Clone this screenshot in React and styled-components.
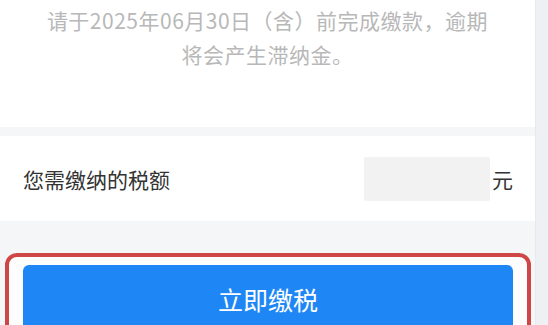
import React from "react";
import styled, { createGlobalStyle } from "styled-components";

const Global = createGlobalStyle`
  html, body { margin: 0; padding: 0; }
  body {
    background: #f5f6f8;
    font-family: "Noto Sans CJK SC", "Noto Sans", sans-serif;
    overflow: hidden;
  }
`;

const Page = styled.div`
  display: flex;
  width: 548px;
  height: 325px;
  overflow: hidden;
`;

const Main = styled.div`
  width: 535px;
  display: flex;
  flex-direction: column;
  background: #f5f6f8;
`;

const ScrollStrip = styled.div`
  flex: 1;
  background: #eef0f3;
  border-left: 1px solid #e6e9ed;
`;

const NoticeCard = styled.div`
  background: #ffffff;
  height: 127px;
  flex-shrink: 0;
  box-sizing: border-box;
  padding-top: 3px;
  text-align: center;
  color: #b8b8b8;
  font-size: 21px;
  font-weight: 400;
  letter-spacing: 0.5px;
  line-height: 34px;
`;

const AmountCard = styled.div`
  margin-top: 9px;
  background: #ffffff;
  height: 85px;
  flex-shrink: 0;
  display: flex;
  align-items: center;
  padding: 0 22px 0 23px;
`;

const Label = styled.div`
  flex: 1;
  font-size: 21px;
  color: #333333;
`;

const AmountBox = styled.div`
  width: 126px;
  height: 44px;
  background: #f2f2f2;
  border-radius: 2px;
`;

const Unit = styled.div`
  margin-left: 2px;
  font-size: 21px;
  color: #333333;
`;

const Highlight = styled.div`
  margin: 32px 0 0 5px;
  width: 526px;
  flex-shrink: 0;
  box-sizing: border-box;
  border: 4px solid #cf4646;
  border-radius: 12px;
  padding: 8px 14px 0;
  background: #fdfdfd;
`;

const PayButton = styled.button`
  display: flex;
  align-items: center;
  justify-content: center;
  width: 100%;
  height: 68px;
  border: none;
  border-radius: 6px;
  background: #1f87f5;
  color: #ffffff;
  font-family: "Noto Sans CJK SC", "Noto Sans", sans-serif;
  font-size: 25px;
  padding: 0;
`;

export default function App() {
  return (
    <>
      <Global />
      <Page>
        <Main>
          <NoticeCard>
            请于2025年06月30日（含）前完成缴款，逾期
            <br />
            将会产生滞纳金。
          </NoticeCard>
          <AmountCard>
            <Label>您需缴纳的税额</Label>
            <AmountBox />
            <Unit>元</Unit>
          </AmountCard>
          <Highlight>
            <PayButton>立即缴税</PayButton>
          </Highlight>
        </Main>
        <ScrollStrip />
      </Page>
    </>
  );
}
